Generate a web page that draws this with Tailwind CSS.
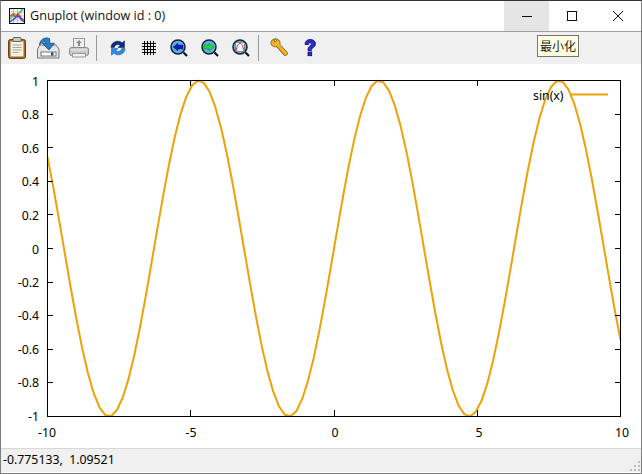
<!DOCTYPE html>
<html>
<head>
<meta charset="utf-8">
<script src="https://cdn.jsdelivr.net/npm/@tailwindcss/browser@4"></script>
</head>
<body class="bg-white overflow-hidden">
<div class="flex flex-col w-[642px] h-[474px] bg-white border-x border-b border-x-[#7f7f7f] border-b-[#7f7f7f] border-t border-t-[#333333] font-['Noto_Sans',sans-serif] text-[12.3px] text-black relative">
  <div class="flex items-center h-[30px] shrink-0 bg-white">
    <svg class="w-[16px] h-[16px] ml-[8px] shrink-0" viewBox="0 0 16 16"><rect x="0.5" y="0.5" width="15" height="15" fill="#fff" stroke="#000"/><path d="M1 4h14M1 8h14M1 12h14M4.500 1v14M8.500 1v14M12 1v14" stroke="#999" stroke-width="0.6"/><path d="M1 11L5 6l3 1 6-6" fill="none" stroke="#3fd04a" stroke-width="1.600"/><path d="M1 8l3-2 2 3 3-3 3 4 3 2" fill="none" stroke="#e8303a" stroke-width="1.300"/><path d="M1 14l4-3 4-3 3 3 3 3" fill="none" stroke="#2a3fe8" stroke-width="1.300"/></svg>
    <span class="ml-[5px] text-[12.6px] font-['Open_Sans',sans-serif] text-[#111]">Gnuplot (window id : 0)</span>
    <div class="flex ml-auto h-full">
      <div class="w-[45px] h-full bg-[#e5e5e5] flex items-center justify-center"><svg class="w-[10px] h-[10px]" viewBox="0 0 10 10"><path d="M0 5.500h10" stroke="#111" stroke-width="1"/></svg></div>
      <div class="w-[46px] h-full flex items-center justify-center"><svg class="w-[10px] h-[10px]" viewBox="0 0 10 10"><rect x="0.5" y="0.5" width="9" height="9" fill="none" stroke="#111"/></svg></div>
      <div class="w-[46px] h-full flex items-center justify-center"><svg class="w-[10px] h-[10px]" viewBox="0 0 10 10"><path d="M0 0L10 10M10 0L0 10" stroke="#111" stroke-width="1"/></svg></div>
    </div>
  </div>
  <div class="flex items-center h-[33px] shrink-0 bg-[#f0f0f0] border-t border-t-[#a0a0a0]">
    <div class="w-[31px] flex justify-center"><svg class="w-[24px] h-[24px]" viewBox="0 0 24 24"><rect x="3.500" y="3.500" width="17" height="19" rx="2" fill="#a8641e" stroke="#6b3f10"/><rect x="5.500" y="5.500" width="13" height="15" fill="#f6f1e0" stroke="#b5ad98" stroke-width="0.6"/><rect x="8" y="1.500" width="8" height="4" rx="1" fill="#c9c9c2" stroke="#66665f"/><path d="M7.500 9h9M7.500 11.500h9M7.500 14h9M7.500 16.500h6" stroke="#a5a5a0"/></svg></div>
    <div class="w-[31px] flex justify-center"><svg class="w-[24px] h-[24px]" viewBox="0 0 24 24"><path d="M1.500 13L4 9h16l3 4v9H1.500z" fill="#e4e6e8" stroke="#77797c"/><rect x="5" y="16" width="15" height="4" fill="#fff" stroke="#777"/><rect x="15" y="16.500" width="2.500" height="3" fill="#444"/><path d="M3.500 9C4 3 9 .8 13.500 2.500L14 7.500l4.500-.2L13 14 6.500 7.500l3.500 0C9.500 5 6 5.500 3.500 9z" fill="#2f7cc0" stroke="#174f85" stroke-width="0.8"/></svg></div>
    <div class="w-[31px] flex justify-center"><svg class="w-[24px] h-[24px]" viewBox="0 0 24 24"><rect x="6.500" y="2.500" width="11" height="10" fill="#eeeeee" stroke="#9a9a9a"/><path d="M12 4l3 3h-2v3h-2V7H9z" fill="#8a8a8a"/><rect x="2.500" y="11.500" width="19" height="8" rx="2" fill="#c9c9c9" stroke="#8a8a8a"/><rect x="5.500" y="17.500" width="13" height="3.500" fill="#f0f0f0" stroke="#999"/><path d="M4 14h16" stroke="#eee"/></svg></div>
    <div class="w-px h-[26px] bg-[#9a9a9a] ml-[2px] mr-[5px]"></div>
    <div class="w-[31px] flex justify-center"><svg class="w-[16px] h-[16px]" viewBox="0 0 16 16"><path d="M1 7.500C1 3.500 4.500 .8 8.500 1.200c1.800.2 2.700.9 3.500 1.700L14.500 .8V7.500H8l2.200-2.200C8 3.800 5 4.500 4.300 7.500z" fill="#0b2c86" stroke="#041a55" stroke-width="0.5"/><path d="M15 8.500c0 4-3.500 6.700-7.500 6.300-1.800-.2-2.700-.9-3.500-1.700L1.500 15.200V8.500H8l-2.200 2.200c2.200 1.500 5.200.8 5.900-2.200z" fill="#2f8ae6" stroke="#0c4a9a" stroke-width="0.5"/></svg></div>
    <div class="w-[31px] flex justify-center"><svg class="w-[16px] h-[16px]" viewBox="0 0 16 16"><path d="M1 3.500h14M1 6.500h14M1 9.500h14M1 12.500h14M3.500 1v14M6.500 1v14M9.500 1v14M12.500 1v14" stroke="#000" stroke-width="1"/></svg></div>
    <div class="w-[30px] flex justify-center"><svg class="w-[20px] h-[20px]" viewBox="0 0 20 20"><path d="M14.500 14.500l3.500 3.500" stroke="#111" stroke-width="2.200"/><circle cx="9" cy="9" r="7" fill="#5fb2e6" stroke="#123" stroke-width="1.500"/><path d="M9 5v2h5v4H9v2L4 9z" fill="#0a1fb8" stroke="#061266" stroke-width="0.4"/></svg></div>
    <div class="w-[31px] flex justify-center"><svg class="w-[20px] h-[20px]" viewBox="0 0 20 20"><path d="M14.500 14.500l3.500 3.500" stroke="#111" stroke-width="2.200"/><circle cx="9" cy="9" r="7" fill="#5fb2e6" stroke="#123" stroke-width="1.500"/><path d="M9 5v2H4v4h5v2l5-4z" fill="#19d83a" stroke="#0a6a1a" stroke-width="0.4"/></svg></div>
    <div class="w-[31px] flex justify-center"><svg class="w-[20px] h-[20px]" viewBox="0 0 20 20"><path d="M14.500 14.500l3.500 3.500" stroke="#111" stroke-width="2.200"/><circle cx="9" cy="9" r="7" fill="#5fb2e6" stroke="#123" stroke-width="1.500"/><rect x="4.500" y="4.500" width="9" height="9" fill="#fff" stroke="#555" stroke-width="0.6"/><path d="M5 13C6 8 7 5.500 9 5.500s3 3 4 7.500" fill="none" stroke="#d92020" stroke-width="1"/></svg></div>
    <div class="w-px h-[26px] bg-[#9a9a9a] ml-[2px] mr-[4px]"></div>
    <div class="w-[31px] flex justify-center"><svg class="w-[20px] h-[20px]" viewBox="0 0 20 20"><path d="M7.500 .8C4 .5 1.500 2.500 2 6l1.500 2c1.500 1 3 1 4.300.6l7.200 8.400c1.700 1.700 4.500-.8 3-2.800L11 6.500c.3-2.500-.5-4.500-2.500-5.500L6.500 4 4.800 3z" fill="#f7b21f" stroke="#6e5210" stroke-width="0.8"/><path d="M7 8l8.500 9.500" stroke="#7a5a14" stroke-width="1" opacity="0.5"/></svg></div>
    <div class="w-[31px] flex justify-center"><svg class="w-[20px] h-[20px]" viewBox="0 0 20 20"><path d="M5 6.500C5 3 7.500 1.500 10.200 1.500c3 0 5.300 1.700 5.300 4.300 0 2.300-1.500 3.200-2.800 4.200-1 .8-1.200 1.200-1.200 2.500H8V11.500c0-1.700.8-2.700 2-3.600.9-.7 1.500-1.100 1.500-1.900 0-.8-.6-1.300-1.400-1.300-1 0-1.500.7-1.500 1.800z" fill="#2a2ad6" stroke="#0c0c66" stroke-width="0.8"/><rect x="8" y="14" width="3.700" height="3.700" fill="#2a2ad6" stroke="#0c0c66" stroke-width="0.8"/></svg></div>
  </div>
  <svg class="block w-[640px] h-[384px] shrink-0 bg-white font-['Noto_Sans',sans-serif] text-[12.3px]" viewBox="1 64 640 384">
    <polyline id="curve" fill="none" stroke="#eda207" stroke-width="2" stroke-linejoin="round" points=""/>
    <rect x="47.500" y="80.500" width="573" height="336" fill="none" stroke="#000" stroke-width="1"/>
    <path stroke="#000" stroke-width="1" d="M47 114.500h6M47 147.500h6M47 181.500h6M47 214.500h6M47 248.500h6M47 282.500h6M47 315.500h6M47 349.500h6M47 382.500h6M621 114.500h-6M621 147.500h-6M621 181.500h-6M621 214.500h-6M621 248.500h-6M621 282.500h-6M621 315.500h-6M621 349.500h-6M621 382.500h-6M190.500 416v-6M334.500 416v-6M477.500 416v-6M190.500 81v5M334.500 81v5M477.500 81v5"/>
    <g text-anchor="end" fill="#000">
      <text x="39" y="86">1</text><text x="39" y="119">0.8</text><text x="39" y="153">0.6</text><text x="39" y="186">0.4</text><text x="39" y="220">0.2</text><text x="39" y="254">0</text><text x="39" y="287">-0.2</text><text x="39" y="320">-0.4</text><text x="39" y="354">-0.6</text><text x="39" y="387">-0.8</text><text x="39" y="421">-1</text>
    </g>
    <g text-anchor="middle" fill="#000">
      <text x="47" y="437">-10</text><text x="191" y="437">-5</text><text x="335" y="437">0</text><text x="479" y="437">5</text><text x="622" y="437">10</text>
    </g>
    <text x="533" y="100" fill="#000">sin(x)</text>
    <path d="M570 94.500h38" stroke="#eda207" stroke-width="2"/>
  </svg>
  <div class="flex items-center h-[24px] shrink-0 bg-[#f0f0f0] border-t border-t-[#d8d8d8] pl-[2px] relative">
    <span class="whitespace-pre">-0.775133,  1.09521</span>
    <svg class="absolute right-0 bottom-0 w-[12px] h-[12px]" viewBox="0 0 12 12"><path d="M9 1h2v2H9zM5 5h2v2H5zM9 5h2v2H9zM1 9h2v2H1zM5 9h2v2H5zM9 9h2v2H9z" fill="#bdbdbd"/></svg>
  </div>
  <div class="absolute left-[536px] top-[34px] w-[42px] h-[22px] bg-[#ffffe1] border border-[#767676] flex items-center justify-center font-['Noto_Sans_CJK_SC',sans-serif] text-[12px] text-[#222]">最小化</div>
</div>
<script>
var pts=[];for(var i=0;i<100;i++){var x=-10+20*i/99;var px=47.5+(x+10)*28.65;var py=248.5-168*Math.sin(x);pts.push(px.toFixed(2)+","+py.toFixed(2));}
document.getElementById("curve").setAttribute("points",pts.join(" "));
</script>
</body>
</html>
